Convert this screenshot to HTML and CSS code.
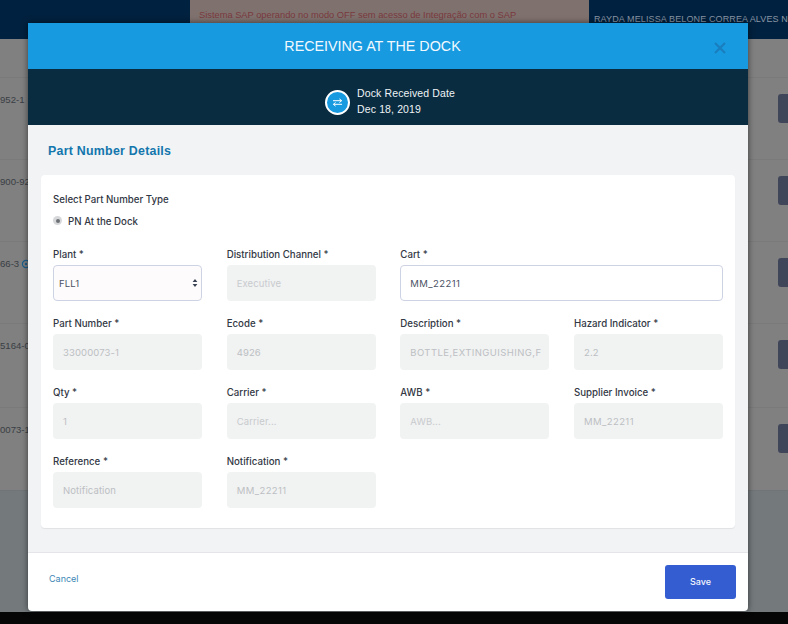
FILE: index.html
```html
<!DOCTYPE html>
<html lang="en">
<head>
<meta charset="utf-8">
<title>Receiving at the Dock</title>
<link rel="stylesheet" href="styles.css">
</head>
<body>
<div class="page">
  <header class="topbar">
    <div class="alert">Sistema SAP operando no modo OFF sem acesso de Integração com o SAP</div>
    <div class="user">RAYDA MELISSA BELONE CORREA ALVES N</div>
  </header>
  <div class="rows">
    <div class="row"><span class="pn">952-1</span><span class="rowbtn"></span></div>
    <div class="row"><span class="pn">900-92</span><span class="rowbtn"></span></div>
    <div class="row"><span class="pn">66-3<svg class="pn-icon" width="10" height="10" viewBox="0 0 10 10"><circle cx="5" cy="5" r="3.6" fill="none" stroke="#1d5f8c" stroke-width="1.2"/><circle cx="5" cy="5" r="1.2" fill="#1d5f8c"/></svg></span><span class="rowbtn"></span></div>
    <div class="row row-tall"><span class="pn">5164-0</span><span class="rowbtn"></span></div>
    <div class="row"><span class="pn">0073-1</span><span class="rowbtn"></span></div>
  </div>
  <div class="pagefoot"></div>
  <div class="blackbar"></div>
</div>

<section class="modal">
  <div class="modal-head">
    <h1 class="modal-title">RECEIVING AT THE DOCK</h1>
    <svg class="close" width="12" height="12" viewBox="0 0 12 12"><path d="M1 1 11 11M11 1 1 11" stroke="#1a7fbf" stroke-width="2.2" fill="none"/></svg>
  </div>
  <div class="modal-sub">
    <span class="swap">
      <svg width="11" height="9" viewBox="0 0 11 9"><path d="M1 2.7H9.4M7.4 .9 9.7 2.7 7.4 4.5M10 6.3H1.6M3.6 4.5 1.3 6.3 3.6 8.1" stroke="#fff" stroke-width="1" fill="none"/></svg>
    </span>
    <div class="sub-text"><div>Dock Received Date</div><div>Dec 18, 2019</div></div>
  </div>
  <div class="modal-body">
    <h2 class="section-title">Part Number Details</h2>
    <div class="card">
      <div class="type-label">Select Part Number Type</div>
      <div class="radio-line"><span class="radio"></span><span>PN At the Dock</span></div>
      <div class="grid">
        <div class="field"><label>Plant *</label><div class="control select"><span>FLL1</span>
          <svg width="6" height="10" viewBox="0 0 6 10"><path d="M3 1 5.4 4H.6ZM3 9 .6 6H5.4Z" fill="#3a4254"/></svg></div></div>
        <div class="field"><label>Distribution Channel *</label><div class="control off ph">Executive</div></div>
        <div class="field wide"><label>Cart *</label><div class="control live caps">MM_22211</div></div>

        <div class="field"><label>Part Number *</label><div class="control off">33000073-1</div></div>
        <div class="field"><label>Ecode *</label><div class="control off">4926</div></div>
        <div class="field"><label>Description *</label><div class="control off long">BOTTLE,EXTINGUISHING,F</div></div>
        <div class="field"><label>Hazard Indicator *</label><div class="control off">2.2</div></div>

        <div class="field"><label>Qty *</label><div class="control off">1</div></div>
        <div class="field"><label>Carrier *</label><div class="control off ph">Carrier...</div></div>
        <div class="field"><label>AWB *</label><div class="control off ph">AWB...</div></div>
        <div class="field"><label>Supplier Invoice *</label><div class="control off caps">MM_22211</div></div>

        <div class="field"><label>Reference *</label><div class="control off">Notification</div></div>
        <div class="field"><label>Notification *</label><div class="control off caps">MM_22211</div></div>
      </div>
    </div>
  </div>
  <div class="modal-foot">
    <a class="cancel">Cancel</a>
    <button class="save">Save</button>
  </div>
</section>
</body>
</html>
```
FILE: styles.css
```css
* { box-sizing: border-box; }
html, body { margin: 0; padding: 0; height: 100%; overflow: hidden; }
body { background: #808080; font-family: "Inter", "Liberation Sans", sans-serif; }

.page { width: 788px; height: 624px; display: flex; flex-direction: column; overflow: hidden; }
.topbar { height: 39px; flex: none; background: #00213f; display: flex; padding-left: 190px; }
.alert { width: 399px; background: #7f716e; color: #7a3a3e; font: 9.3px/30px "Liberation Sans", sans-serif; padding-left: 9px; white-space: nowrap; }
.user { flex: 1; color: #8a96a5; font: 9px/38px "Liberation Sans", sans-serif; padding-left: 5px; white-space: nowrap; overflow: hidden; letter-spacing: .12px; }

.rows { height: 451px; flex: none; padding-top: 38px; }
.row { height: 82px; border-top: 1px solid #7a7a7a; display: flex; justify-content: space-between; align-items: flex-start; padding-top: 16px; }
.row-tall { height: 84px; }
.pn { font: 9.6px/12px "Liberation Sans", sans-serif; color: #3a3e44; white-space: nowrap; display: flex; align-items: center; gap: 2px; }
.pn-icon { flex: none; }
.rowbtn { width: 10px; height: 29px; background: #40465a; border-radius: 3px 0 0 3px; }
.pagefoot { flex: 1; background: #747a7c; border-top: 1px solid #6f7577; }
.blackbar { height: 12px; flex: none; background: #060606; }

.modal { position: absolute; left: 28px; top: 23px; width: 720px; height: 588px; background: #fff; border-radius: 0 0 4px 4px; box-shadow: 0 0 6px rgba(0,0,0,.55); display: flex; flex-direction: column; overflow: hidden; }
.modal-head { height: 46px; flex: none; background: #179ae0; display: flex; align-items: center; justify-content: center; position: relative; padding-right: 31px; }
.modal-title { margin: 0; color: #f2f9fe; font: 400 14.3px/46px "Liberation Sans", sans-serif; }
.close { position: absolute; right: 22px; top: 19px; }
.modal-sub { height: 56px; flex: none; background: #0a2c40; display: flex; align-items: center; justify-content: center; gap: 7px; color: #eef3f6; font: 10.5px/16px "Liberation Sans", sans-serif; padding: 10px 0 0 4px; }
.swap { width: 25px; height: 25px; border-radius: 50%; background: #179ae0; border: 2px solid #fff; display: flex; align-items: center; justify-content: center; }
.sub-text { letter-spacing: .12px; margin-top: -2px; }

.modal-body { flex: 1; background: #f1f3f5; padding: 0 13px; }
.section-title { margin: 0; height: 50px; padding: 19px 0 0 7px; color: #1376ad; font: 700 12.4px/15px "Liberation Sans", sans-serif; letter-spacing: .25px; }
.card { height: 353px; background: #fff; border-radius: 4px; box-shadow: 0 1px 1px rgba(0,0,0,.07); padding: 19px 12px 0; }
.type-label, .radio-line, label { color: #323844; font-size: 9.7px; line-height: 12px; font-weight: 500; }
.radio-line { display: flex; align-items: center; gap: 6px; margin-top: 10px; height: 12px; }
.radio { width: 9px; height: 9px; margin-top: -3px; border-radius: 50%; background: #d6d8da; display: flex; align-items: center; justify-content: center; }
.radio::after { content: ""; width: 4px; height: 4px; border-radius: 50%; background: #6d7175; }

.grid { display: grid; grid-template-columns: repeat(4, 149px); justify-content: space-between; row-gap: 17px; margin-top: 21px; }
.field { display: flex; flex-direction: column; gap: 4px; min-width: 0; }
.wide { grid-column: span 2; }
label { height: 12px; }
.control { height: 36px; border-radius: 4px; padding: 0 10px; font: 400 9.5px/37px "Inter", sans-serif; white-space: nowrap; overflow: hidden; letter-spacing: .12px; }
.off { background: #f1f2f2; color: #bcbfc3; }
.ph { color: #c8cbce; }
.caps { letter-spacing: .42px; }
.long { letter-spacing: .42px; }
.live { background: #fff; border: 1px solid #ced3e4; color: #4a5264; line-height: 35px; padding-left: 9px; }
.select { background: #fdfbfb; border: 1px solid #ced3e4; color: #4a5264; line-height: 35px; display: flex; justify-content: space-between; align-items: center; padding: 0 3px 0 5px; }

.modal-foot { height: 59px; flex: none; border-top: 1px solid #e3e5e8; display: flex; justify-content: space-between; align-items: flex-start; padding: 12px 12px 0 21px; }
.cancel { color: #3d87b6; font: 400 9px/28px "Inter", sans-serif; }
.save { width: 71px; height: 34px; border: 0; border-radius: 3px; background: #335dd0; color: #f4f6fd; font: 500 9px/34px "Inter", sans-serif; padding: 0; }
```
